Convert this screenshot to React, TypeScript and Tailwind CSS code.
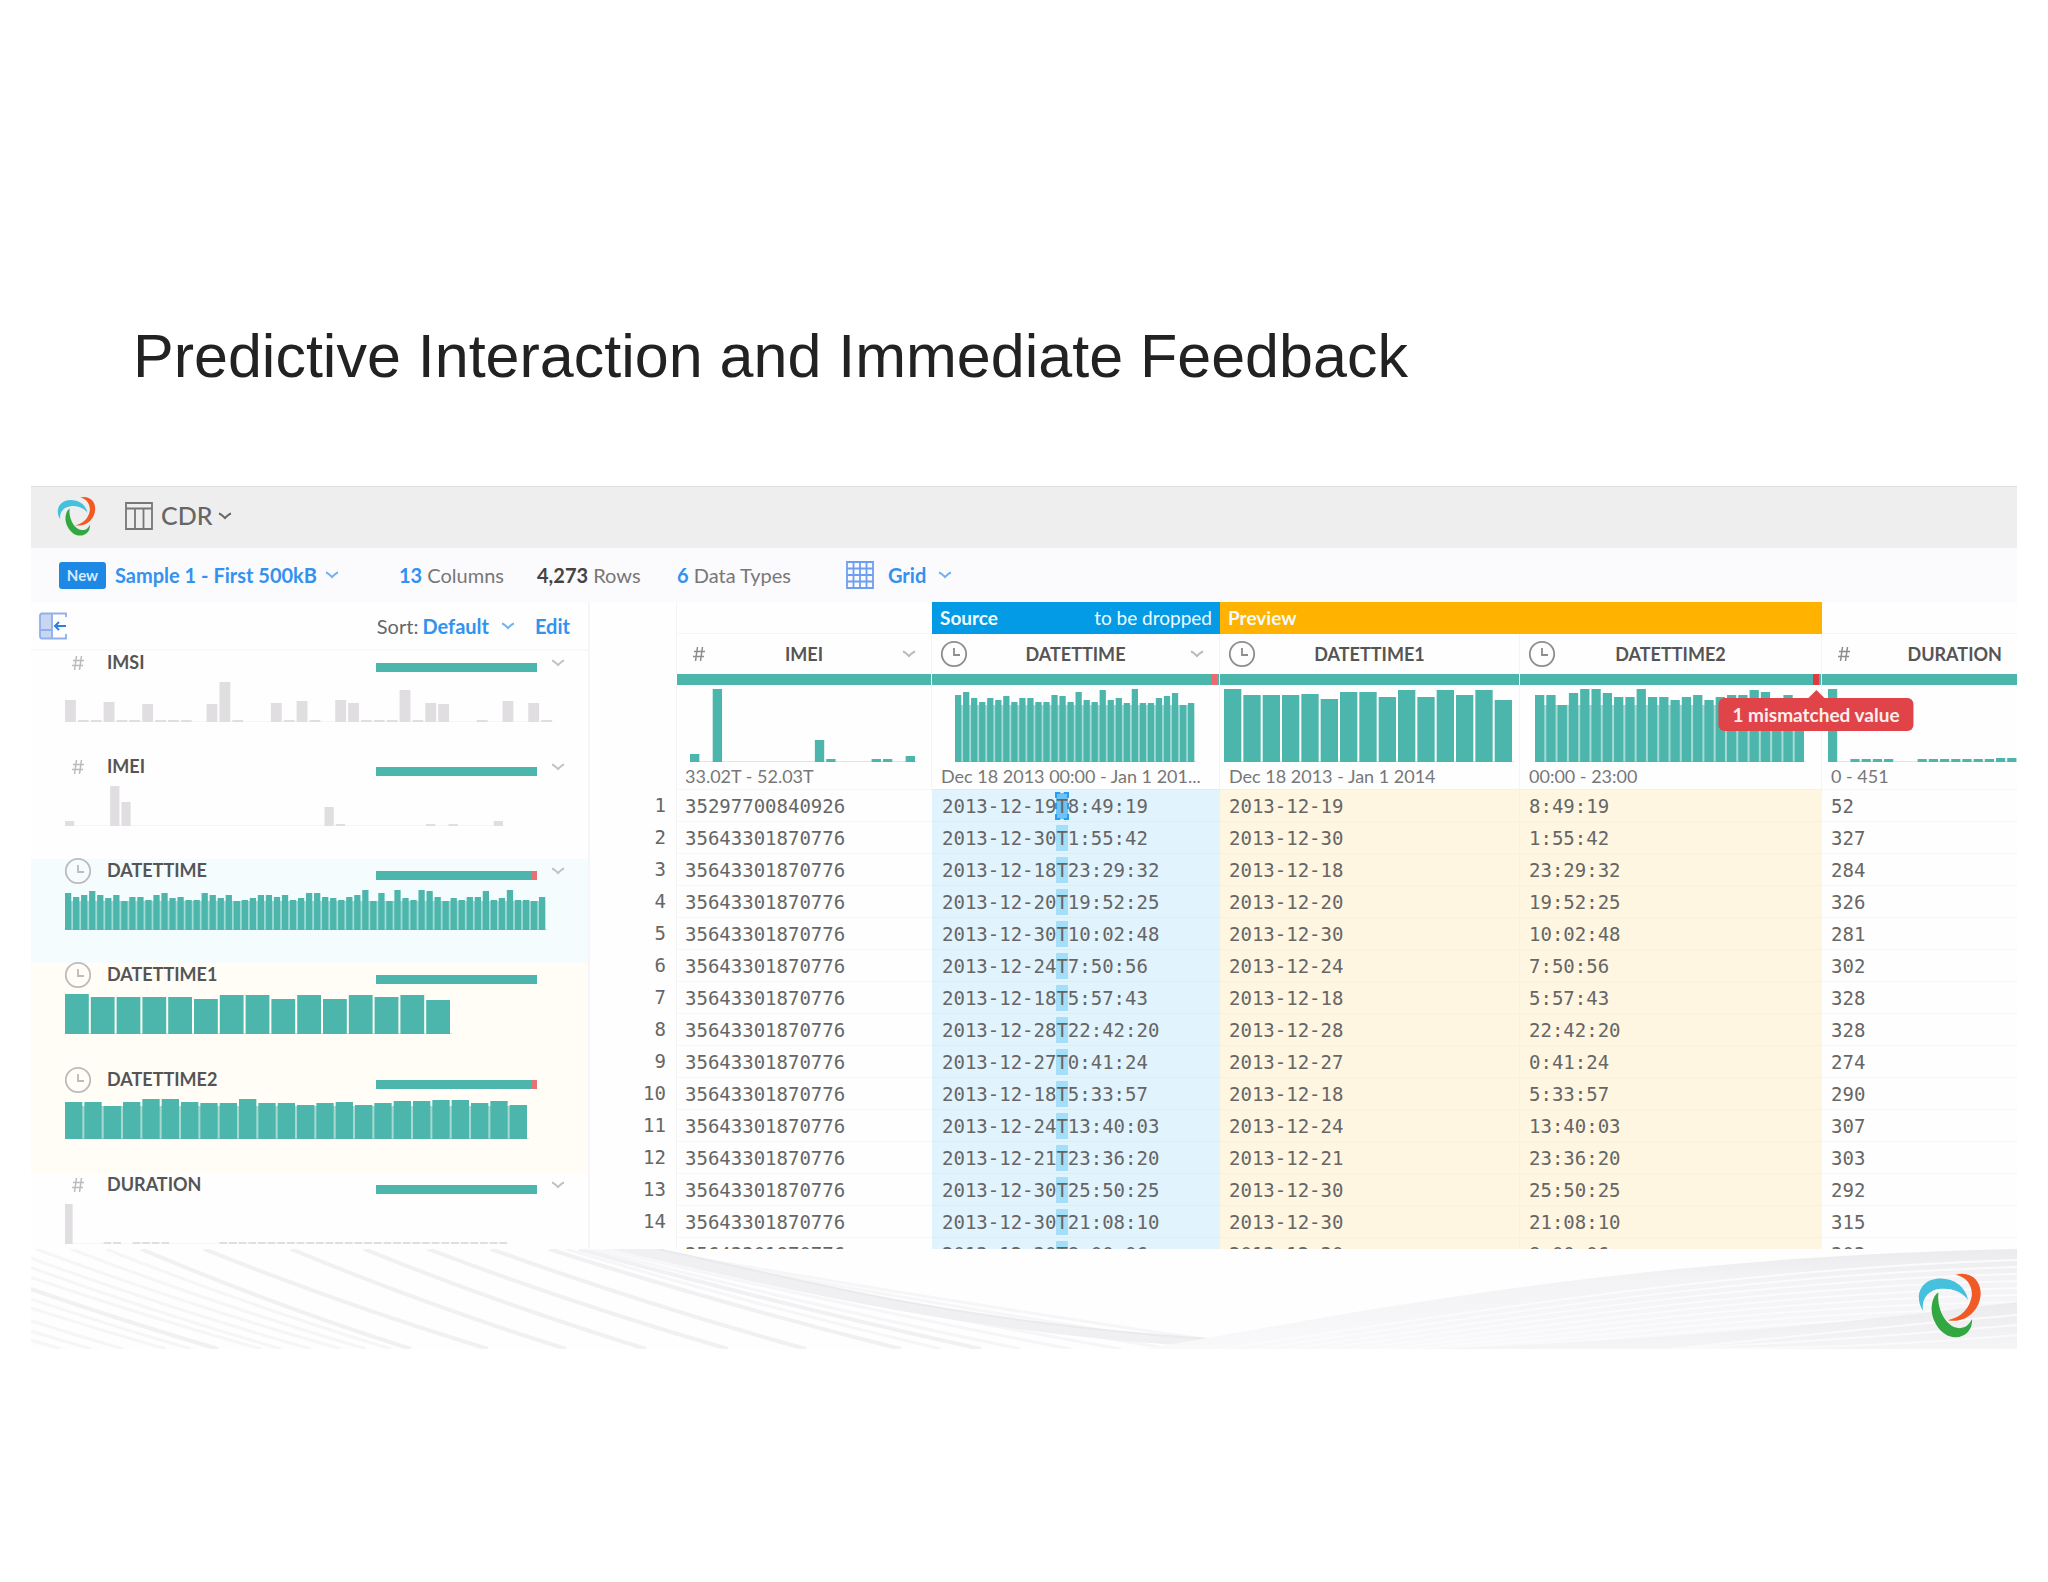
import clsx from "clsx";

type ColumnKind = "number" | "date";

type SidebarColumn = {
  name: string;
  kind: ColumnKind;
  chartWidth: number;
  values: number[];
  muted?: boolean;
  mismatched?: boolean;
  menu?: boolean;
  tint?: "source" | "preview";
};

// Places a few bars into an otherwise empty histogram
const sparse = (length: number, bars: Record<number, number>) =>
  Array.from({ length }, (_, i) => bars[i] ?? 0);

const sidebarColumns: SidebarColumn[] = [
  {
    name: "IMSI",
    kind: "number",
    chartWidth: 489,
    muted: true,
    menu: true,
    values: [
      22, 2, 2, 20, 2, 2, 18, 2, 2, 2, 0, 18, 40, 2, 0, 0, 19, 2, 21, 2, 0, 22,
      19, 2, 2, 2, 32, 2, 19, 18, 0, 0, 2, 0, 21, 0, 19, 2,
    ],
  },
  {
    name: "IMEI",
    kind: "number",
    chartWidth: 440,
    muted: true,
    menu: true,
    values: sparse(39, { 0: 5, 4: 40, 5: 24, 23: 19, 24: 2, 32: 2, 34: 2, 38: 5 }),
  },
  {
    name: "DATETTIME",
    kind: "date",
    chartWidth: 482,
    mismatched: true,
    menu: true,
    tint: "source",
    values: [
      37, 33, 35, 39, 35, 32, 35, 29, 33, 33, 30, 35, 37, 32, 33, 30, 30, 37, 35,
      32, 35, 29, 30, 32, 35, 35, 33, 35, 30, 32, 37, 37, 33, 32, 30, 33, 35, 40,
      29, 37, 29, 40, 32, 30, 40, 39, 33, 29, 32, 30, 33, 33, 39, 30, 32, 40, 30,
      30, 29, 33,
    ],
  },
  {
    name: "DATETTIME1",
    kind: "date",
    chartWidth: 387,
    tint: "preview",
    values: [40, 37, 37, 37, 37, 35, 39, 39, 35, 39, 35, 39, 37, 39, 34],
  },
  {
    name: "DATETTIME2",
    kind: "date",
    chartWidth: 464,
    mismatched: true,
    tint: "preview",
    values: [
      37, 37, 33, 37, 40, 40, 37, 36, 36, 40, 36, 36, 34, 36, 37, 34, 36, 38, 38,
      39, 39, 36, 38, 34,
    ],
  },
  {
    name: "DURATION",
    kind: "number",
    chartWidth: 444,
    muted: true,
    menu: true,
    values: Array.from({ length: 46 }, (_, i) => {
      if (i === 0) return 40;
      return i === 4 || i === 5 || (i > 6 && i < 11) || i > 15 ? 2 : 0;
    }),
  },
];

const gridCharts = {
  imei: sparse(20, { 0: 8, 2: 73, 11: 22, 12: 3, 16: 3, 17: 3, 19: 6 }),
  datetime: [
    67, 70, 64, 60, 64, 62, 66, 60, 64, 64, 60, 60, 67, 66, 60, 70, 62, 60, 72,
    62, 64, 59, 73, 59, 59, 64, 66, 69, 57, 59,
  ],
  datetime1: [73, 67, 67, 67, 68, 63, 70, 70, 65, 72, 65, 72, 67, 72, 62],
  datetime2: [
    67, 67, 57, 69, 73, 73, 69, 65, 65, 73, 65, 65, 62, 65, 67, 62, 65, 67, 67,
    72, 70, 64, 67, 62,
  ],
  duration: Array.from({ length: 20 }, (_, i) => {
    if (i === 0) return 73;
    if (i > 14) return 4;
    return (i > 1 && i < 6) || i > 7 ? 3 : 0;
  }),
};

const rows = [
  ["35297700840926", "2013-12-19", "8:49:19", "52"],
  ["35643301870776", "2013-12-30", "1:55:42", "327"],
  ["35643301870776", "2013-12-18", "23:29:32", "284"],
  ["35643301870776", "2013-12-20", "19:52:25", "326"],
  ["35643301870776", "2013-12-30", "10:02:48", "281"],
  ["35643301870776", "2013-12-24", "7:50:56", "302"],
  ["35643301870776", "2013-12-18", "5:57:43", "328"],
  ["35643301870776", "2013-12-28", "22:42:20", "328"],
  ["35643301870776", "2013-12-27", "0:41:24", "274"],
  ["35643301870776", "2013-12-18", "5:33:57", "290"],
  ["35643301870776", "2013-12-24", "13:40:03", "307"],
  ["35643301870776", "2013-12-21", "23:36:20", "303"],
  ["35643301870776", "2013-12-30", "25:50:25", "292"],
  ["35643301870776", "2013-12-30", "21:08:10", "315"],
  ["35643301870776", "2013-12-30", "8:00:06", "303"],
];

const Logo = ({ className }: { className?: string }) => (
  <svg viewBox="0 0 200 200" className={className} aria-hidden="true">
    <path
      fill="#f15a24"
      d="M120 8C165 -4 197 25 196 66C194 116 150 158 96 146C138 138 164 108 169 72C172 40 152 14 120 8Z"
    />
    <path
      fill="#45c1de"
      d="M22 118C-8 75 14 20 74 20C117 20 149 45 158 84C135 56 105 48 74 51C38 54 14 82 22 118Z"
    />
    <path
      fill="#33a842"
      d="M68 62C62 108 88 164 128 170C150 172 163 158 170 142C172 175 150 199 118 198C76 196 42 145 48 100C51 80 58 68 68 62Z"
    />
  </svg>
);

const Chevron = ({ className }: { className?: string }) => (
  <svg
    viewBox="0 0 14 8"
    className={clsx("h-2 w-3.5 shrink-0", className)}
    fill="none"
    stroke="currentColor"
    strokeWidth="2"
    aria-hidden="true"
  >
    <path d="M1 1.5C3 2 5 4 7 6C9 4 11 2 13 1.5" />
  </svg>
);

const KindIcon = ({ kind, light }: { kind: ColumnKind; light?: boolean }) => {
  const color = light ? "text-[#bdbabd]" : "text-[#8f8c8f]";
  if (kind === "number") {
    return (
      <svg
        viewBox="0 0 14 16"
        className={clsx("h-4 w-3.5", color)}
        fill="none"
        stroke="currentColor"
        strokeWidth="1.5"
        aria-hidden="true"
      >
        <path d="M5.5 1L3.5 15M10.5 1L8.5 15M2 5.5H13M1 10.5H12" />
      </svg>
    );
  }
  return (
    <svg
      viewBox="0 0 28 28"
      className={clsx("size-7 shrink-0", color)}
      fill="none"
      stroke="currentColor"
      strokeWidth="1.8"
      aria-hidden="true"
    >
      <circle cx="14" cy="14" r="12.2" />
      <path d="M14 8V15H20" />
    </svg>
  );
};

type HistogramProps = {
  values: number[];
  width: number;
  height: number;
  muted?: boolean;
};

const Histogram = ({ values, width, height, muted }: HistogramProps) => {
  const step = width / values.length;
  const gap = Math.min(2, step * 0.22);
  return (
    <svg
      width={width}
      height={height}
      className={clsx("block shrink-0", muted ? "text-[#e1dee2]" : "text-[#4db6ac]")}
      fill="currentColor"
      aria-hidden="true"
    >
      <rect y={height - 1} width={width} height="1" opacity="0.25" />
      {!muted && values.length > 20 && (
        <rect y={height - Math.min(...values)} width={width - gap} height={height} opacity="0.5" />
      )}
      {values.map((value, i) => (
        <rect
          key={i}
          x={i * step}
          y={height - value}
          width={step - gap}
          height={value}
        />
      ))}
    </svg>
  );
};

const SidebarCard = ({ column }: { column: SidebarColumn }) => (
  <li
    className={clsx(
      "pl-[34px]",
      column.tint === "preview" ? "h-[105px]" : "h-[104px]",
      column.tint === "source" && "bg-[#f5fcfe]",
      column.tint === "preview" && "bg-[#fffdf5]",
    )}
  >
    <div className="flex h-[31px] items-start">
      <div className="flex h-6 w-[26px] items-center justify-center">
        <KindIcon kind={column.kind} light />
      </div>
      <div className="ml-4 w-[269px] text-[18px] leading-[22px] font-bold text-[#555]">
        {column.name}
      </div>
      <div className="mt-3 flex h-[9px] w-[161px] bg-[#4db6ac]">
        {column.mismatched && <div className="ml-auto w-1.5 bg-[#e57373]" />}
      </div>
      {column.menu && (
        <button
          type="button"
          aria-label={`${column.name} menu`}
          className="mt-2 ml-3.5 text-[#c4c1c4]"
        >
          <Chevron />
        </button>
      )}
    </div>
    <Histogram
      values={column.values}
      width={column.chartWidth}
      height={40}
      muted={column.muted}
    />
  </li>
);

const Sidebar = () => (
  <aside className="w-[559px] shrink-0 border-r-2 border-[#f7f5f9] bg-[#fefefe]">
    <div className="flex h-[49px] items-center border-b-2 border-[#faf8fb] pr-[18px] pl-2 text-[20px]">
      <button type="button" aria-label="Collapse panel">
        <svg viewBox="0 0 28 28" className="size-7" fill="none" aria-hidden="true">
          <rect x="1" y="1" width="12" height="26" rx="2" fill="#c9d6f3" />
          <path
            d="M27 5V1.5H3Q1 1.5 1 4V24Q1 26.5 3 26.5H27V22M13 1V27M1 18H13"
            stroke="#8fb0ea"
            strokeWidth="1.8"
          />
          <path d="M27 14H16M20 10L16 14L20 18" stroke="#2f7fe0" strokeWidth="2" />
        </svg>
      </button>
      <span className="ml-auto text-[#666]">Sort:</span>
      <button type="button" className="ml-1 flex items-center gap-3 font-bold text-[#3392ee]">
        Default
        <Chevron className="text-[#6fb1f2]" />
      </button>
      <button type="button" className="ml-5 font-bold text-[#3392ee]">
        Edit
      </button>
    </div>
    <ul>
      {sidebarColumns.map((column) => (
        <SidebarCard key={column.name} column={column} />
      ))}
    </ul>
  </aside>
);

type HeaderCellProps = { name: string; kind: ColumnKind; menu?: boolean };

const HeaderCell = ({ name, kind, menu }: HeaderCellProps) => (
  <th scope="col" className="border-r border-[#f5f3f7] p-0 px-2 font-bold">
    <div className="flex items-center">
      <div className="flex w-7 justify-center">
        <KindIcon kind={kind} />
      </div>
      <div className="flex-1 text-center">{name}</div>
      <div className="flex w-7 justify-center">
        {menu && (
          <button type="button" aria-label={`${name} menu`} className="text-[#bbb8bb]">
            <Chevron />
          </button>
        )}
      </div>
    </div>
  </th>
);

const QualityBar = ({ mark, tooltip }: { mark?: string; tooltip?: string }) => (
  <td className="border-r border-white p-0">
    <div className="flex h-[11px] justify-end bg-[#4db6ac] pr-0.5">
      {mark && (
        <div className={clsx("relative w-1.5", mark)}>
          {tooltip && (
            <div
              role="tooltip"
              className="absolute top-[24px] left-1/2 z-10 -translate-x-1/2 rounded-md bg-[#e04348] px-3.5 text-[19px] leading-[33px] font-bold whitespace-nowrap text-[#fdeeee]"
            >
              <div className="absolute -top-2 left-1/2 -translate-x-1/2 border-x-8 border-b-8 border-x-transparent border-b-[#e04348]" />
              {tooltip}
            </div>
          )}
        </div>
      )}
    </div>
  </td>
);

const DataGrid = () => (
  <div className="min-w-0 flex-1 overflow-hidden bg-[#fefefe]">
    <table className="w-[105%] table-fixed border-separate border-spacing-0 text-left">
      <colgroup>
        <col className="w-[87px]" />
        <col className="w-[255px]" />
        <col className="w-[288px]" />
        <col className="w-[300px]" />
        <col className="w-[302px]" />
        <col />
      </colgroup>
      <thead>
        <tr className="h-8 text-[19px] leading-6 text-[#f2faff]">
          <td className="border-r border-[#f5f3f7] p-0" />
          <td className="border-b border-[#f7f5f9] p-0" />
          <th className="bg-[#039be5] p-0 px-2">
            <div className="flex justify-between">
              <span className="font-bold">Source</span>
              <span className="font-normal">to be dropped</span>
            </div>
          </th>
          <th colSpan={2} className="bg-[#ffb300] p-0 px-2 font-bold">
            Preview
          </th>
          <td className="border-b border-[#f7f5f9] p-0" />
        </tr>
        <tr className="h-10 text-[18px] text-[#555]">
          <td className="border-r border-[#f5f3f7] p-0" />
          <HeaderCell name="IMEI" kind="number" menu />
          <HeaderCell name="DATETTIME" kind="date" menu />
          <HeaderCell name="DATETTIME1" kind="date" />
          <HeaderCell name="DATETTIME2" kind="date" />
          <HeaderCell name="DURATION" kind="number" />
        </tr>
        <tr>
          <td className="p-0" />
          <QualityBar />
          <QualityBar mark="bg-[#ec6a70]" />
          <QualityBar />
          <QualityBar mark="bg-[#e53940]" tooltip="1 mismatched value" />
          <QualityBar />
        </tr>
        <tr className="h-[77px] align-bottom">
          <td className="border-r border-[#f5f3f7] p-0" />
          <td className="border-r border-[#f5f3f7] p-0 pl-[13px]">
            <Histogram values={gridCharts.imei} width={227} height={74} />
          </td>
          <td className="border-r border-[#f5f3f7] p-0 pl-[23px]">
            <Histogram values={gridCharts.datetime} width={241} height={74} />
          </td>
          <td className="border-r border-[#f5f3f7] p-0 pl-1">
            <Histogram values={gridCharts.datetime1} width={290} height={74} />
          </td>
          <td className="border-r border-[#f5f3f7] p-0 pl-[15px]">
            <Histogram values={gridCharts.datetime2} width={271} height={74} />
          </td>
          <td className="p-0 pl-1.5">
            <Histogram values={gridCharts.duration} width={224} height={74} />
          </td>
        </tr>
        <tr className="h-[27px] text-[18px] leading-6 text-[#777]">
          <td className="border-r border-[#f5f3f7] p-0" />
          <td className="border-r border-[#f5f3f7] p-0 px-2">33.02T - 52.03T</td>
          <td className="border-r border-[#f5f3f7] p-0 pl-[9px] whitespace-nowrap">
            Dec 18 2013 00:00 - Jan 1 201...
          </td>
          <td className="border-r border-[#f5f3f7] p-0 px-[9px]">Dec 18 2013 - Jan 1 2014</td>
          <td className="border-r border-[#f5f3f7] p-0 px-[9px]">00:00 - 23:00</td>
          <td className="p-0 px-[9px]">0 - 451</td>
        </tr>
      </thead>
      <tbody className="font-['DejaVu_Sans_Mono',monospace] text-[19px] leading-6 text-[#666]">
        {rows.map(([imei, date, time, duration], i) => (
          <tr key={i} className="h-8">
            <td className="border-r border-[#f5f3f7] p-0 pr-2.5 text-right">
              {i < 14 ? i + 1 : ""}
            </td>
            <td className="border-t border-[#f8f6fa] p-0 px-2">{imei}</td>
            <td className="border-t border-[#dbeef8] bg-[#e1f3fd] p-0 px-2.5 whitespace-nowrap">
              {date}
              <span
                className={clsx(
                  "py-0.5",
                  i === 0
                    ? "bg-[#6ec3f5] outline-2 -outline-offset-1 outline-[#2b9df0] outline-dashed"
                    : "bg-[#a3dff8]",
                )}
              >
                T
              </span>
              {time}
            </td>
            <td className="border-t border-r border-[#fbf0dc] bg-[#fff6e1] p-0 px-[9px]">{date}</td>
            <td className="border-t border-[#fbf0dc] bg-[#fff6e1] p-0 px-[9px]">{time}</td>
            <td className="border-t border-[#f8f6fa] p-0 px-[9px]">{duration}</td>
          </tr>
        ))}
      </tbody>
    </table>
  </div>
);

const Toolbar = () => (
  <div className="flex h-[54px] items-center bg-[#fbfafd] pl-7 text-[20px] text-[#777]">
    <span className="w-[47px] rounded-[3px] bg-[#1e88e5] text-center text-[15px] leading-[27px] font-bold text-[#d8ebfc]">
      New
    </span>
    <button
      type="button"
      className="ml-[9px] flex w-[284px] items-center gap-2 font-bold text-[#3392ee]"
    >
      Sample 1 - First 500kB
      <Chevron className="text-[#6fb1f2]" />
    </button>
    <span className="w-[138px]">
      <b className="text-[#3392ee]">13</b> Columns
    </span>
    <span className="w-[140px]">
      <b className="text-[#444]">4,273</b> Rows
    </span>
    <span className="w-[169px]">
      <b className="text-[#3392ee]">6</b> Data Types
    </span>
    <button type="button" className="flex items-center font-bold text-[#3392ee]">
      <svg
        viewBox="0 0 28 28"
        className="size-7"
        fill="none"
        stroke="#6d9ff0"
        strokeWidth="1.8"
        aria-hidden="true"
      >
        <path d="M1 1H27V27H1ZM1 7.5H27M1 14H27M1 20.5H27M7.5 1V27M14 1V27M20.5 1V27" />
      </svg>
      <span className="mr-3 ml-3.5">Grid</span>
      <Chevron className="text-[#6fb1f2]" />
    </button>
  </div>
);

// Start and end x of each line, top edge to bottom edge
const boldWaves = [
  [-110, 187], [110, 380], [173, 457], [260, 535], [333, 615], [397, 697],
  [460, 775], [518, 870], [548, 950],
];

const fineWaves = [
  [-270, 30], [-240, 60], [-205, 92], [-170, 135], [-140, 160], [-80, 230],
  [-50, 250], [-25, 280], [5, 310], [40, 335], [75, 360], [535, 910],
  [560, 990], [572, 1040], [584, 1090], [596, 1140], [606, 1190], [614, 1240],
];

const wavePath = ([from, to]: number[]) =>
  `M${from} 0Q${(from + to) / 2 - 8} 54 ${to} 100`;

const Footer = () => (
  <footer className="relative h-[100px] overflow-hidden bg-[#fefefe]">
    <svg
      viewBox="0 0 1986 100"
      preserveAspectRatio="none"
      className="block h-full w-full"
      fill="none"
      aria-hidden="true"
    >
      <defs>
        <linearGradient id="wave" x1="0" y1="0" x2="0" y2="1">
          <stop offset="0" stopColor="#ebeaec" />
          <stop offset="0.3" stopColor="#f3f2f4" />
          <stop offset="1" stopColor="#f9f8fa" />
        </linearGradient>
        <linearGradient id="wave-low" x1="0" y1="0" x2="0" y2="1">
          <stop offset="0" stopColor="#ebeaec" />
          <stop offset="1" stopColor="#f5f4f6" />
        </linearGradient>
      </defs>
      {fineWaves.map((wave) => (
        <path key={wave[0]} d={wavePath(wave)} stroke="#f6f5f7" strokeWidth="3" />
      ))}
      {boldWaves.map((wave) => (
        <path key={wave[0]} d={wavePath(wave)} stroke="#f1f0f2" strokeWidth="4" />
      ))}
      <path
        d="M580 0H627C800 38 980 88 1330 96H1700V100H1240C1030 96 830 60 580 0Z"
        fill="#f0eff1"
      />
      <path d="M627 0C800 38 980 88 1330 97" stroke="#eae9eb" strokeWidth="2" />
      <path d="M1115 100C1330 62 1600 8 1986 0V100Z" fill="url(#wave)" />
      {Array.from({ length: 12 }, (_, i) => (
        <path
          key={i}
          d={`M${1190 + i * 32} 100C${1430 + i * 24} ${64 + i * 3} ${1700 + i * 8} ${20 + i * 6} 1986 ${11 + i * 7}`}
          stroke="#fbfafc"
          strokeWidth="2"
        />
      ))}
      <path d="M1390 100C1620 92 1800 76 1986 53V100Z" fill="url(#wave-low)" />
      {[66, 76, 86].map((y) => (
        <path key={y} d={`M1640 100Q1830 ${y + 14} 1986 ${y}`} stroke="#fafafb" strokeWidth="2" />
      ))}
    </svg>
    <Logo className="absolute top-[23px] right-[35px] size-[66px]" />
  </footer>
);

export default function App() {
  return (
    <main className="min-h-screen bg-white px-[31px] pt-[320px] font-[Lato,sans-serif]">
      <h1 className="mb-[94px] ml-[102px] font-['Liberation_Sans',sans-serif] text-[61px] leading-[72px] text-[#222]">
        Predictive Interaction and Immediate Feedback
      </h1>
      <section>
        <header className="flex h-[62px] items-center border-t border-[#dedede] bg-[#efeeef] pb-1 pl-[25px]">
          <Logo className="size-10" />
          <button
            type="button"
            className="ml-[29px] flex items-center text-[25px] font-medium text-[#666]"
          >
            <svg
              viewBox="0 0 28 28"
              className="size-7"
              fill="none"
              stroke="#777"
              strokeWidth="1.8"
              aria-hidden="true"
            >
              <path d="M1 1H27V27H1ZM1 6.5H27M10 6.5V27M18.5 6.5V27" />
            </svg>
            <span className="mr-1.5 ml-2">CDR</span>
            <Chevron />
          </button>
        </header>
        <Toolbar />
        <div className="flex h-[647px] overflow-hidden">
          <Sidebar />
          <DataGrid />
        </div>
        <Footer />
      </section>
    </main>
  );
}
